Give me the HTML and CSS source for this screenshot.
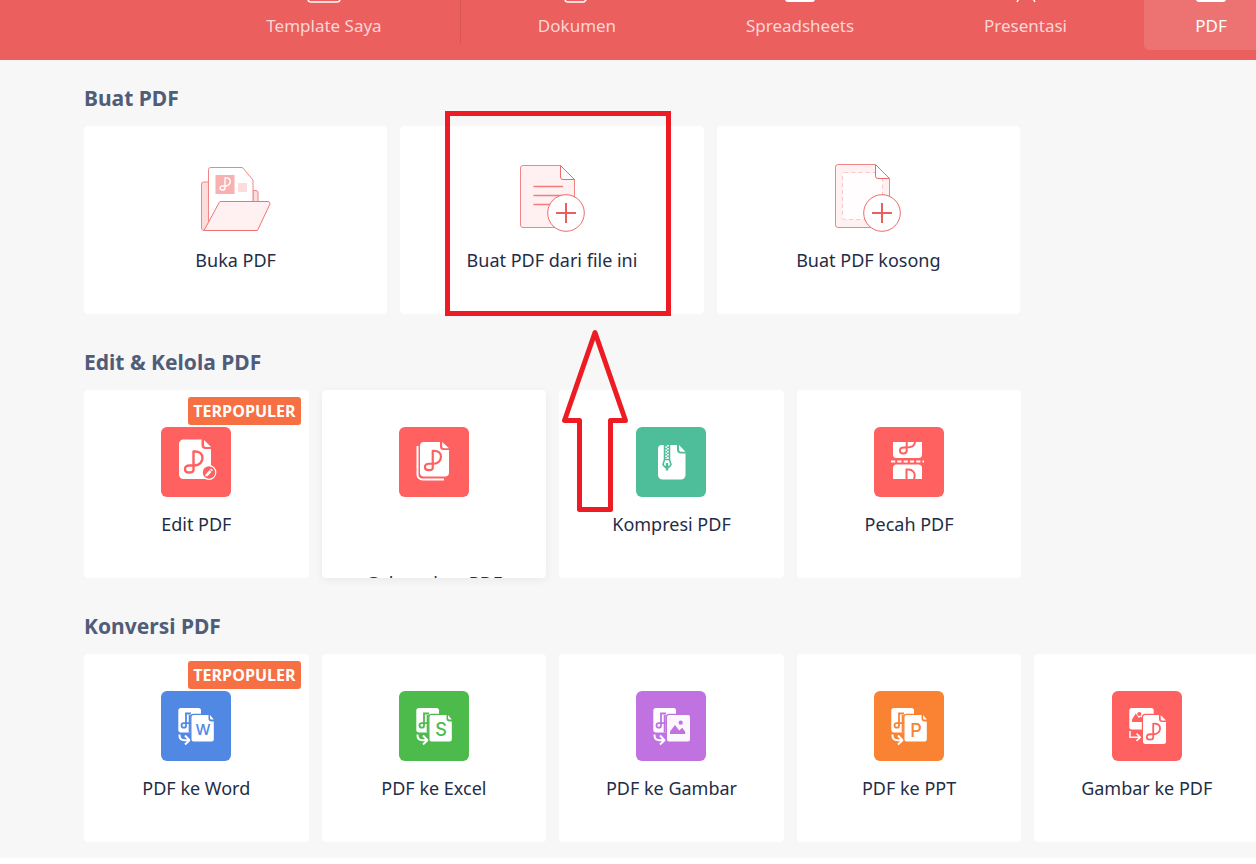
FILE: index.html
```html
<!DOCTYPE html>
<html lang="id">
<head>
    <meta charset="UTF-8">
    <meta name="viewport" content="width=device-width, initial-scale=1.0">
    <title>PDF</title>
    <link rel="stylesheet" href="styles.css">
</head>
<body>
    <!-- shared icon parts -->
    <svg class="defs" aria-hidden="true">
        <defs>
            <path id="ribbon" d="M9.5 20V1.5H11c5 0 7.5 3 7.5 6.5s-3 7.5-8 7.5h-5c-3 0-4.5 1.2-4.5 3.5s1.5 3.5 4 3.5 4.5-.5 4.5-2.5z" fill="none" stroke-width="2.4" stroke-linejoin="round"/>
            <g id="back-doc">
                <path d="M20 17h17.500a2.500 2.500 0 0 1 2.500 2.500V41.500H20a2.700 2.700 0 0 1-2.700-2.700V19.700A2.700 2.700 0 0 1 20 17z" fill="#fff"/>
                <path d="M30 22.500h-5v12.200c0 1.200-.8 2-2.200 2s-2.300-.8-2.300-2.200.9-2.300 2.400-2.300H30" fill="none" stroke="currentColor" stroke-width="1.800"/>
                <path d="M28.700 24v17.500" stroke="currentColor" stroke-width="2"/>
            </g>
            <path id="turn" d="M18.500 43.500v1c0 3 2 4.700 5 4.700h4.500M24 44.500l4.500 4.700-4.500 4.300" fill="none" stroke="#fff" stroke-width="2"/>
            <g id="front-doc">
                <path d="M32.500 24h15v3.500a3 3 0 0 0 3 3h2.300v18a2 2 0 0 1-2 2H32.500a2 2 0 0 1-2-2V26a2 2 0 0 1 2-2z" fill="#fff" stroke="currentColor" stroke-width="2.400" paint-order="stroke"/>
                <path d="M49 24l3.800 4.500h-2.300a1.500 1.500 0 0 1-1.500-1.500z" fill="#fff"/>
            </g>
            <g id="plus">
                <circle cx="49" cy="50" r="18.300" fill="#fff" stroke="#ee6a6a"/>
                <path d="M49 40v20M39 50h20" stroke="#eb5f5f" stroke-width="2"/>
            </g>
        </defs>
    </svg>

    <header class="header">
        <nav class="tabs">
            <a class="tab tab-first" href="#">
                <svg width="36" height="32" viewBox="0 0 36 32"><rect x="2" y="2" width="32" height="29" rx="3" fill="none" stroke="#fff" stroke-width="1.500"/></svg>
                Template Saya
            </a>
            <a class="tab" href="#">
                <svg width="36" height="32" viewBox="0 0 36 32"><path d="M6 2h22v26l-3 3H9a3 3 0 0 1-3-3z" fill="none" stroke="#fff" stroke-width="1.500"/></svg>
                Dokumen
            </a>
            <a class="tab" href="#">
                <svg width="36" height="32" viewBox="0 0 36 32"><rect x="4" y="2" width="28" height="28" rx="2" fill="none" stroke="#fff" stroke-width="2"/></svg>
                Spreadsheets
            </a>
            <a class="tab" href="#">
                <svg width="36" height="32" viewBox="0 0 36 32"><path d="M4 2h28v20H4zM13 24l-4 7M23 24l4 7" fill="none" stroke="#fff" stroke-width="1.500"/></svg>
                Presentasi
            </a>
            <a class="tab active" href="#" aria-current="page">
                <svg width="36" height="32" viewBox="0 0 36 32"><rect x="4" y="2" width="28" height="28" rx="2" fill="none" stroke="#fff" stroke-width="2"/></svg>
                PDF
            </a>
        </nav>
    </header>

    <main class="content">
        <section>
            <h2>Buat PDF</h2>
            <div class="cards three">
                <a class="card" href="#">
                    <svg class="icon" viewBox="0 0 70 70">
                        <path d="M7 19H2.500a2 2 0 0 0-2 2v44a2.500 2.500 0 0 0 2.500 2.500h27M52 27.500h3a2 2 0 0 1 2 2V39H52z" fill="#ffdcdc" stroke="#f08585"/>
                        <path d="M7.500 58V6.500a2 2 0 0 1 2-2h32L52 17v22" fill="#fff" stroke="#f08585"/>
                        <rect x="14.500" y="12" width="19" height="19" fill="#f8b0b0"/>
                        <use href="#ribbon" transform="translate(18.500 14) scale(.58)" stroke="#fff"/>
                        <rect x="37" y="20" width="9" height="9" fill="#fcdcdc"/>
                        <path d="M20 38.500h47a2 2 0 0 1 1.800 2.800L56.500 67.500H3L18 39.800a2.200 2.200 0 0 1 2-1.300z" fill="#fff1f1" stroke="#ee7474"/>
                    </svg>
                    <span class="label">Buka PDF</span>
                </a>
                <a class="card" href="#">
                    <svg class="icon" viewBox="0 0 70 70">
                        <path d="M6 2.500h37l14.500 14V64.500H6a2.500 2.500 0 0 1-2.500-2.500V5A2.500 2.500 0 0 1 6 2.500z" fill="#fff1f1" stroke="#f08585"/>
                        <path d="M43.500 2.500v11.500a2.500 2.500 0 0 0 2.500 2.500h11.500z" fill="#fff" stroke="#ee6a6a"/>
                        <path d="M16.500 23.500H46M16.500 32.500H46M16.500 41.500H46" stroke="#f07c7c" stroke-width="1.500"/>
                        <use href="#plus"/>
                    </svg>
                    <span class="label">Buat PDF dari file ini</span>
                </a>
                <a class="card" href="#">
                    <svg class="icon" viewBox="0 0 70 70">
                        <path d="M5 1.500h37.500l14 14V64.500H5A2.500 2.500 0 0 1 2.500 62V4A2.500 2.500 0 0 1 5 1.500z" fill="#fff1f1" stroke="#f08585"/>
                        <rect x="9.500" y="9.500" width="40" height="47" rx="2" fill="#fffdfd" stroke="#fbc8c8" stroke-dasharray="4 3"/>
                        <path d="M42.500 1.500V13a2.500 2.500 0 0 0 2.500 2.500h11.500z" fill="#fff" stroke="#ee6a6a"/>
                        <use href="#plus"/>
                    </svg>
                    <span class="label">Buat PDF kosong</span>
                </a>
            </div>
        </section>

        <section>
            <h2>Edit &amp; Kelola PDF</h2>
            <div class="cards">
                <a class="card" href="#">
                    <span class="badge">TERPOPULER</span>
                    <svg class="icon tile red" viewBox="0 0 70 70">
                        <path d="M22.500 12.500H40.500V18a4 4 0 0 0 4 4H50v30H22.500A4.500 4.500 0 0 1 18 47.500V17a4.500 4.500 0 0 1 4.500-4.500z" fill="#fff"/>
                        <path d="M43 13l7 7h-5a2 2 0 0 1-2-2z" fill="#fff"/>
                        <use href="#ribbon" transform="translate(23 23)" stroke="currentColor"/>
                        <circle cx="48" cy="45.500" r="6.800" fill="currentColor" stroke="#fff" stroke-width="1.200"/>
                        <path d="M45.500 48.300l4-4.300" stroke="#fff" stroke-width="2.600"/>
                        <path d="M50 43.500l1-1.200" stroke="#fff" stroke-width="2.600"/>
                        <path d="M44.200 49.500l.5-2.600 2 2z" fill="#fff"/>
                    </svg>
                    <span class="label">Edit PDF</span>
                </a>
                <a class="card hover" href="#">
                    <svg class="icon tile red" viewBox="0 0 70 70">
                        <path d="M18.500 19v28.500a5 5 0 0 0 5 5H45" fill="none" stroke="#fff" stroke-width="2"/>
                        <path d="M25 15h16v4.500a3.500 3.500 0 0 0 3.500 3.500H50v22.500a4 4 0 0 1-4 4H25a4 4 0 0 1-4-4V19a4 4 0 0 1 4-4z" fill="#fff"/>
                        <path d="M43.200 15l6.800 6.300h-5a1.800 1.800 0 0 1-1.800-1.800z" fill="#fff"/>
                        <use href="#ribbon" transform="translate(25 22.500) scale(.92)" stroke="currentColor"/>
                    </svg>
                    <span class="label">Gabungkan PDF</span>
                </a>
                <a class="card" href="#">
                    <svg class="icon tile teal" viewBox="0 0 70 70">
                        <path d="M26 18h15v4.500a4 4 0 0 0 4 4h4.500V48a4.500 4.500 0 0 1-4.500 4.500H26.500A4.500 4.500 0 0 1 22 48V22a4 4 0 0 1 4-4z" fill="#fff"/>
                        <path d="M43 18l6.500 6.700H45a2 2 0 0 1-2-2z" fill="#fff"/>
                        <path d="M28.500 18v14M33.500 18v14" stroke="currentColor" stroke-width="1.500"/>
                        <path d="M30 18v13M32 19.500v12" stroke="currentColor" stroke-width="1.800" stroke-dasharray="1.500 1.500"/>
                        <path d="M28.500 32.500h5l1.500 5-1.500 2.200h-5L27 37.500z" fill="#fff" stroke="currentColor" stroke-width="1.600"/>
                        <path d="M31 36v7.500M29 40h4" stroke="currentColor" stroke-width="2.400"/>
                    </svg>
                    <span class="label">Kompresi PDF</span>
                </a>
                <a class="card" href="#">
                    <svg class="icon tile red" viewBox="0 0 70 70">
                        <path d="M19 15h29v12.500a3.500 3.500 0 0 1-3.500 3.500h-22a3.500 3.500 0 0 1-3.500-3.500zM22.500 37.500h22A3.500 3.500 0 0 1 48 41v11H19V41a3.500 3.500 0 0 1 3.500-3.500z" fill="#fff"/>
                        <path d="M32.700 15v8.500c0 2-1.500 3-3.500 3s-3.300-1-3.300-3 1.500-3 4-3h2.800c5 0 8-2 8.300-5.500M32.500 52V42.500h2c4 0 6.200 3 6.200 6 0 1.500-.2 2.500-.9 3.500" fill="none" stroke="currentColor" stroke-width="2"/>
                        <path d="M17 34.500h33" stroke="#fff" stroke-width="2.200" stroke-dasharray="4.200 2.100"/>
                    </svg>
                    <span class="label">Pecah PDF</span>
                </a>
            </div>
        </section>

        <section>
            <h2>Konversi PDF</h2>
            <div class="cards">
                <a class="card" href="#">
                    <span class="badge">TERPOPULER</span>
                    <svg class="icon tile blue" viewBox="0 0 70 70">
                        <use href="#back-doc"/><use href="#turn"/><use href="#front-doc"/>
                        <text class="glyph" x="42" y="44">W</text>
                    </svg>
                    <span class="label">PDF ke Word</span>
                </a>
                <a class="card" href="#">
                    <svg class="icon tile green" viewBox="0 0 70 70">
                        <use href="#back-doc"/><use href="#turn"/><use href="#front-doc"/>
                        <text class="glyph large" x="42" y="45">S</text>
                    </svg>
                    <span class="label">PDF ke Excel</span>
                </a>
                <a class="card" href="#">
                    <svg class="icon tile purple" viewBox="0 0 70 70">
                        <use href="#back-doc"/><use href="#turn"/>
                        <rect x="31" y="24" width="23" height="26.500" rx="2" fill="#fbf7fd" stroke="currentColor" stroke-width="2.400" paint-order="stroke"/>
                        <path d="M34 43v-2.500l5-6.500 4.200 5.500 3-2.800 3 4V43z" fill="currentColor"/>
                        <circle cx="44.700" cy="31.700" r="2.100" fill="currentColor"/>
                    </svg>
                    <span class="label">PDF ke Gambar</span>
                </a>
                <a class="card" href="#">
                    <svg class="icon tile orange" viewBox="0 0 70 70">
                        <use href="#back-doc"/><use href="#turn"/><use href="#front-doc"/>
                        <text class="glyph large" x="42" y="46">P</text>
                    </svg>
                    <span class="label">PDF ke PPT</span>
                </a>
                <a class="card" href="#">
                    <svg class="icon tile red" viewBox="0 0 70 70">
                        <rect x="17.300" y="17" width="24.400" height="21.500" rx="2.500" fill="#fff"/>
                        <path d="M20 31v-2.500l3.800-6 3 4.500 2.200-1.500 2.500 3V31z" fill="currentColor"/>
                        <circle cx="27.300" cy="23" r="2.100" fill="currentColor"/>
                        <path d="M18 40v6.200h9.500M24.500 42.500l3.800 3.700-3.800 3.700" fill="none" stroke="#fff" stroke-width="1.500"/>
                        <path d="M33.500 24H47v4a3 3 0 0 0 3 3h4v19.500a2.500 2.500 0 0 1-2.500 2.500h-18a2.500 2.500 0 0 1-2.500-2.500v-24a2.500 2.500 0 0 1 2.500-2.500z" fill="#fff" stroke="currentColor" stroke-width="2.400" paint-order="stroke"/>
                        <path d="M48.700 24l5.300 5.500h-3.800a1.500 1.500 0 0 1-1.500-1.500z" fill="#fff"/>
                        <use href="#ribbon" transform="translate(34 31.500) scale(.76)" stroke="currentColor"/>
                    </svg>
                    <span class="label">Gambar ke PDF</span>
                </a>
            </div>
        </section>
    </main>

    <!-- highlight over the second card -->
    <div class="frame"></div>
    <svg class="arrow" width="70" height="190" viewBox="0 0 70 190">
        <path d="M35 4.500L4.500 92.500H19.500V181.500H50.500V92.500H65.500z" fill="none" stroke="#ed1c24" stroke-width="5" stroke-linejoin="round"/>
    </svg>
</body>
</html>
```
FILE: styles.css
```css
:root {
    --main-color: #eb5f5e;
    --bg-color: #f7f7f7;
    --font-color: #1f2d46;
    --heading-color: #4f5d79;
    --mark-color: #ed1c24;
}

* {
    box-sizing: border-box;
}

body {
    position: relative;
    margin: 0;
    overflow-x: hidden;
    background-color: #fff;
    color: var(--font-color);
    font-family: "Noto Sans", "Open Sans", sans-serif;
    font-size: 18px;
}

a {
    color: inherit;
    text-decoration: none;
}

.defs {
    position: absolute;
    width: 0;
    height: 0;
}

.header {
    overflow: hidden;
    padding-bottom: 10px;
    background-color: var(--main-color);
}

.tabs {
    display: grid;
    grid-template-columns: 274fr 232fr 214fr 237fr 134fr;
    margin-top: -29px;
    margin-right: -22px;
    padding-left: 187px;
}

.tab {
    display: flex;
    flex-direction: column;
    align-items: center;
    gap: 10px;
    padding-bottom: 11px;
    font-size: 17px;
    line-height: 26px;
    color: #fad6d6;
}

.tab-first {
    background: linear-gradient(#d95554, #d95554) right top / 1px 73px no-repeat;
}

.tab.active {
    border-radius: 5px;
    background-color: #ed7372;
    color: #fff;
}

.content {
    overflow: hidden;
    padding: 24px 0 16px 84px;
    background-color: var(--bg-color);
}

section {
    margin-right: -3px;
}

section + section {
    margin-top: 34px;
}

h2 {
    margin: 0 0 14px;
    font-size: 21px;
    line-height: 28px;
    color: var(--heading-color);
}

.cards {
    display: grid;
    grid-template-columns: repeat(5, 1fr);
    gap: 13px;
}

.cards.three {
    grid-template-columns: repeat(3, 1fr);
    width: calc(80% - 4px);
}

.card {
    position: relative;
    display: flex;
    flex-direction: column;
    align-items: center;
    gap: 14px;
    height: 188px;
    padding-top: 37px;
    overflow: hidden;
    border-radius: 4px;
    background-color: #fff;
}

.card.hover {
    gap: 73px;
    box-shadow: 0 2px 8px rgba(0, 0, 0, 0.06);
}

.icon {
    flex: none;
    width: 70px;
    height: 70px;
}

.tile {
    border-radius: 6px;
    background-color: currentColor;
}

.red { color: #ff6060; }
.teal { color: #4dbd9a; }
.blue { color: #5088e4; }
.green { color: #4cbb4c; }
.purple { color: #c072e0; }
.orange { color: #f98333; }

.glyph {
    fill: currentColor;
    font-family: Inter, sans-serif;
    font-size: 15px;
    font-weight: 500;
    text-anchor: middle;
}

.glyph.large {
    font-size: 18px;
}

.label {
    line-height: 26px;
    white-space: nowrap;
}

.badge {
    position: absolute;
    top: 7px;
    right: 8px;
    padding: 0 5px;
    border-radius: 3px;
    background-color: #f77043;
    color: #fff;
    font-family: "Open Sans", "Noto Sans", sans-serif;
    font-size: 16px;
    font-weight: bold;
    line-height: 28px;
}

.frame {
    position: absolute;
    top: 111px;
    left: 445px;
    width: 226px;
    height: 205px;
    border: 5px solid var(--mark-color);
    pointer-events: none;
}

.arrow {
    position: absolute;
    top: 328px;
    left: 560px;
    pointer-events: none;
}
```
